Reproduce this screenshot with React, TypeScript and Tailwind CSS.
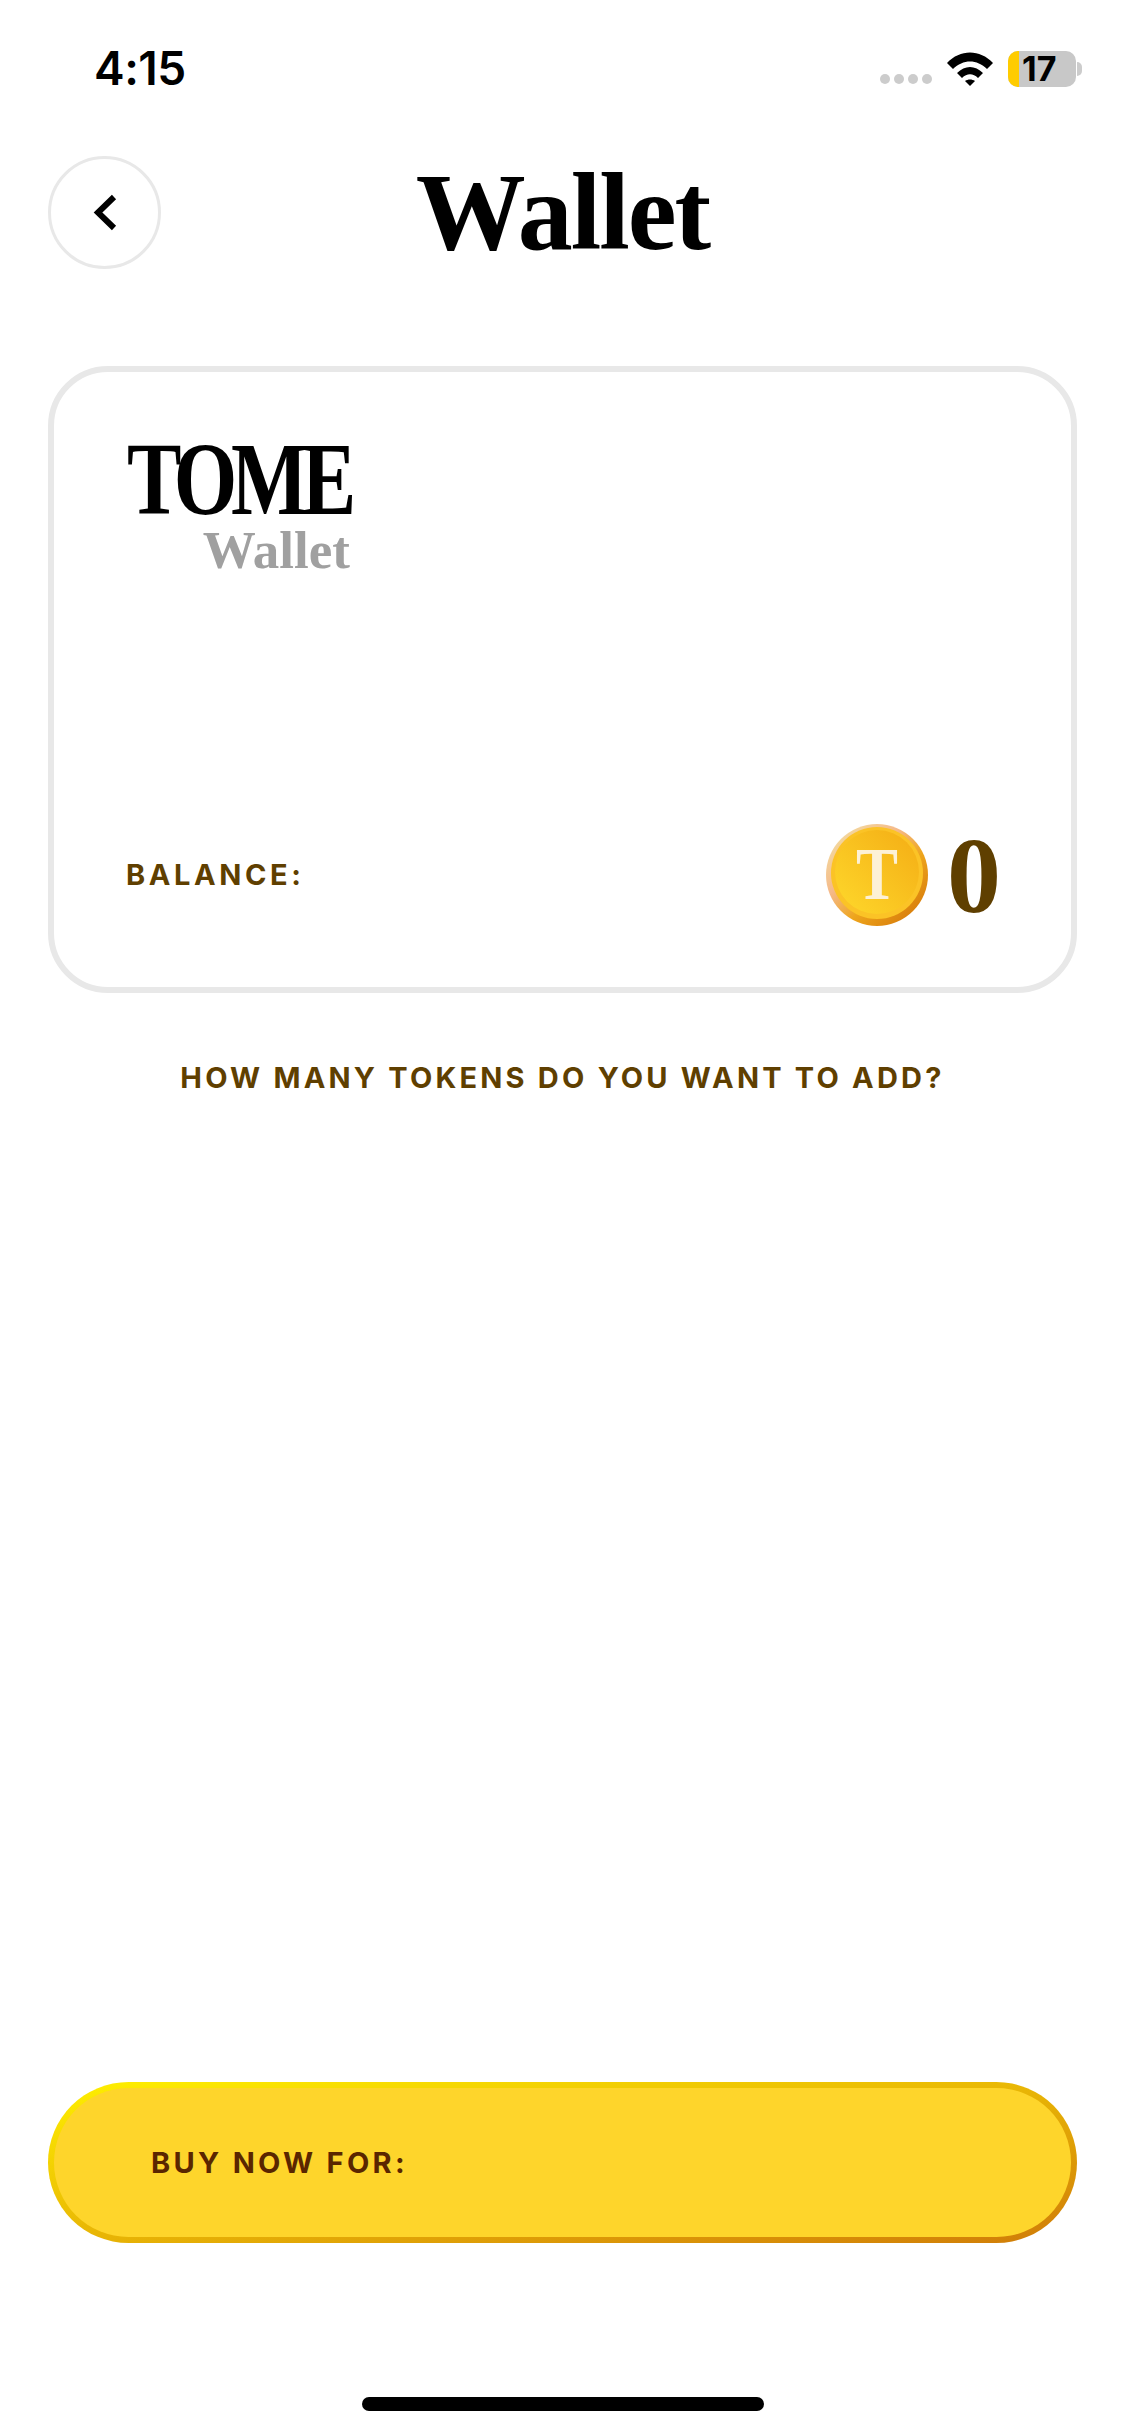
const serif = 'font-["Liberation_Serif",serif]';
const sans = 'font-["Inter",sans-serif]';

function StatusBar() {
    return (
        <div className="flex items-start justify-between h-[156px] pl-[94px] pr-[43px] pt-[41px]">
            <span className={`${sans} text-[46px] leading-[54px] font-semibold tracking-[-0.5px] text-black`}>4:15</span>
            <div className="flex items-center pt-[10px]">
                <div className="flex gap-[4px] mt-[20px] mr-[15px]">
                    {[1, 2, 3, 4].map(i => <div key={i} className="h-[10px] w-[10px] rounded-full bg-[#cccccc]" />)}
                </div>
                <svg width="46" height="34" viewBox="0 0 46 34" className="mr-[15px]">
                    <path d="M0 11 C13 -3 33 -3 46 11 L40 17 C30 7 16 7 6 17 Z" fill="#000" />
                    <path d="M10 21 C18 13 28 13 36 21 L31 26 C26 21 20 21 15 26 Z" fill="#000" />
                    <path d="M18 29 C21 27 25 27 28 29 L23 34 Z" fill="#000" />
                </svg>
                <div className="flex h-[36px] w-[68px] items-center rounded-[10px] bg-[#c8c8c8]">
                    <div className="h-full w-[11px] rounded-l-[10px] bg-[#ffcc00]" />
                    <span className={`${sans} ml-[3px] text-[34px] leading-[36px] font-bold text-black`}>17</span>
                </div>
                <div className="ml-[1px] h-[14px] w-[5px] rounded-r-full bg-[#cccccc]" />
            </div>
        </div>
    );
}

function Coin() {
    return (
        <svg width="102" height="102" viewBox="0 0 102 102">
            <defs>
                <linearGradient id="coinRim" x1="0.1" y1="0.1" x2="0.85" y2="0.9">
                    <stop offset="0" stopColor="#f3dba0" />
                    <stop offset="0.35" stopColor="#f5b98a" />
                    <stop offset="0.65" stopColor="#eea51c" />
                    <stop offset="1" stopColor="#d97f0c" />
                </linearGradient>
                <linearGradient id="coinFace" x1="0.1" y1="0.9" x2="0.9" y2="0.1">
                    <stop offset="0" stopColor="#fdd429" />
                    <stop offset="1" stopColor="#f5b117" />
                </linearGradient>
            </defs>
            <circle cx="51" cy="51" r="51" fill="url(#coinRim)" />
            <circle cx="51" cy="49" r="46" fill="#fbc326" />
            <circle cx="51" cy="48" r="42" fill="url(#coinFace)" />
            <text x="51" y="75" textAnchor="middle" fontFamily="Liberation Serif" fontWeight="bold" fontSize="74" textLength={42} lengthAdjust="spacingAndGlyphs" fill="#fdf1d6">T</text>
        </svg>
    );
}

export default function App() {
    return (
        <div className="flex min-h-[2436px] flex-col bg-white">
            <StatusBar />

            <div className="mx-[48px] grid grid-cols-[113px_1fr_113px] items-center">
                <button className="flex h-[113px] w-[113px] items-center justify-center rounded-full border-[3px] border-[#e8e8e8]">
                    <svg width="24" height="37" viewBox="0 0 24 37" fill="none" stroke="#000" strokeWidth="6">
                        <path d="M21 3 L5 18.5 L21 34" />
                    </svg>
                </button>
                <h1 className={`${serif} text-center text-[110px] leading-[113px] font-bold tracking-[-2px] text-black`}>Wallet</h1>
                <div />
            </div>

            <div className="mx-[48px] mt-[97px] flex h-[627px] flex-col justify-between rounded-[60px] border-[6px] border-[#e8e8e8] pl-[72px] pr-[70px]">
                <div className="mt-[66px] flex w-[224px] flex-col items-end">
                    <span className={`${serif} origin-right scale-x-[0.785] whitespace-nowrap text-[104px] leading-[82px] tracking-[-8px] font-bold text-black`}>TOME</span>
                    <span className={`${serif} mt-[6px] text-[53px] leading-[48px] font-bold text-[#a0a0a0]`}>Wallet</span>
                </div>
                <div className="mb-[60px] flex items-center justify-between">
                    <span className={`${sans} text-[29px] font-bold tracking-[3.6px] text-[#5f3f00]`}>BALANCE:</span>
                    <div className="flex items-center gap-[19px]">
                        <Coin />
                        <span className={`${serif} pt-[3px] text-[108px] leading-[102px] font-bold text-[#5f3f00]`}>0</span>
                    </div>
                </div>
            </div>

            <p className={`${sans} mt-[68px] text-center text-[29px] leading-[34px] font-bold tracking-[3.2px] text-[#5f3f00]`}>
                HOW MANY TOKENS DO YOU WANT TO ADD?
            </p>

            <div className="flex-1" />

            <div className="mx-[48px] h-[161px] rounded-full bg-[linear-gradient(to_bottom_right,#fff000_0%,#e8b505_50%,#d07c08_100%)] p-[6px]">
                <div className="flex h-full items-center rounded-full bg-[#fed52b] pl-[97px]">
                    <span className={`${sans} text-[29px] font-bold tracking-[3.3px] text-[#5a2600]`}>BUY NOW FOR:</span>
                </div>
            </div>

            <div className="mt-[154px] mb-[25px] mx-auto h-[14px] w-[402px] rounded-full bg-black" />
        </div>
    );
}
